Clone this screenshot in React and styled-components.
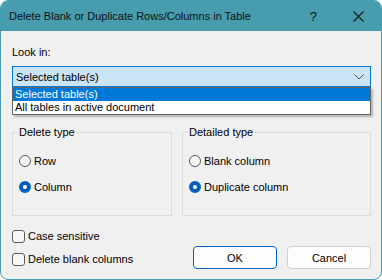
import React from 'react';
import styled, { createGlobalStyle } from 'styled-components';

const GlobalStyle = createGlobalStyle`
    html, body {
        margin: 0;
        padding: 0;
        background: #ffffff;
    }
    body {
        font-family: "Liberation Sans", Arial, sans-serif;
        font-size: 11px;
        color: #000;
    }
`;

const Chevron = () => (
    <svg width="10" height="6" viewBox="0 0 10 6">
        <path d="M0.5 0.5 L5 5 L9.5 0.5" fill="none" stroke="#555" strokeWidth="1" />
    </svg>
);

const CloseIcon = () => (
    <svg width="11" height="11" viewBox="0 0 11 11">
        <path d="M0.5 0.5 L10.5 10.5 M10.5 0.5 L0.5 10.5" fill="none" stroke="#1a1a1a" strokeWidth="1.1" />
    </svg>
);

const Radio = ({ checked, label }) => (
    <RadioRow>
        <RadioDot checked={checked} />
        <span>{label}</span>
    </RadioRow>
);

const Check = ({ label }) => (
    <CheckRow>
        <CheckBox />
        <span>{label}</span>
    </CheckRow>
);

const App = () => {
    return (
        <>
            <GlobalStyle />
            <Window>
                <TitleBar>
                    <Title>Delete Blank or Duplicate Rows/Columns in Table</Title>
                    <TitleButtons>
                        <span className="help">?</span>
                        <CloseIcon />
                    </TitleButtons>
                </TitleBar>
                <Body>
                    <Label>Look in:</Label>
                    <ComboWrap>
                        <Combo>
                            <span>Selected table(s)</span>
                            <Chevron />
                        </Combo>
                        <DropList>
                            <Option selected>Selected table(s)</Option>
                            <Option>All tables in active document</Option>
                        </DropList>
                    </ComboWrap>
                    <Groups>
                        <Group>
                            <Legend>Delete type</Legend>
                            <Radio label="Row" />
                            <Radio checked label="Column" />
                        </Group>
                        <Group>
                            <Legend>Detailed type</Legend>
                            <Radio label="Blank column" />
                            <Radio checked label="Duplicate column" />
                        </Group>
                    </Groups>
                    <Footer>
                        <Checks>
                            <Check label="Case sensitive" />
                            <Check label="Delete blank columns" />
                        </Checks>
                        <Buttons>
                            <Button primary>OK</Button>
                            <Button>Cancel</Button>
                        </Buttons>
                    </Footer>
                </Body>
            </Window>
        </>
    );
}

export default App;

const Window = styled.div`
    width: 382px;
    height: 280px;
    box-sizing: border-box;
    border: 1px solid #479cad;
    border-radius: 8px;
    overflow: hidden;
    background: #f0f0f0;
    display: flex;
    flex-direction: column;
`;

const TitleBar = styled.div`
    height: 30px;
    flex: none;
    background: #479cad;
    display: flex;
    align-items: center;
    justify-content: space-between;
    padding: 0 17px 0 8px;
`;

const Title = styled.div`
    color: #111;
    font-size: 11px;
`;

const TitleButtons = styled.div`
    display: flex;
    align-items: center;
    gap: 36px;

    .help {
        font-size: 13px;
        color: #111;
    }
`;

const Body = styled.div`
    flex: 1;
    padding: 13px 10px 0 11px;
    display: flex;
    flex-direction: column;
`;

const Label = styled.div`
    line-height: 16px;
    height: 16px;
`;

const ComboWrap = styled.div`
    position: relative;
    margin-top: 6px;
`;

const Combo = styled.div`
    height: 21px;
    box-sizing: border-box;
    border: 1px solid #0078d7;
    background: #cce4f7;
    display: flex;
    align-items: center;
    justify-content: space-between;
    padding: 0 6px 0 3px;
`;

const DropList = styled.div`
    position: absolute;
    top: 21px;
    left: 0;
    right: 0;
    background: #fff;
    border: 1px solid #646464;
    box-shadow: 2px 2px 2px rgba(0, 0, 0, 0.25);
    z-index: 2;
`;

const Option = styled.div`
    height: 13px;
    line-height: 13px;
    padding-left: 2px;
    background: ${p => p.selected ? '#0078d7' : '#fff'};
    color: ${p => p.selected ? '#fff' : '#000'};
`;

const Groups = styled.div`
    display: grid;
    grid-template-columns: 160px 189px;
    gap: 10px;
    margin-top: 45px;
`;

const Group = styled.div`
    position: relative;
    height: 84px;
    box-sizing: border-box;
    border: 1px solid #dcdcdc;
    padding: 20px 6px 0;
    display: flex;
    flex-direction: column;
    gap: 10px;
`;

const Legend = styled.span`
    position: absolute;
    top: -9px;
    left: 5px;
    padding: 0 1px;
    background: #f0f0f0;
    line-height: 16px;
`;

const RadioRow = styled.div`
    display: flex;
    align-items: center;
    gap: 3px;
    height: 16px;
`;

const RadioDot = styled.span`
    width: 12px;
    height: 12px;
    box-sizing: border-box;
    border-radius: 50%;
    border: ${p => p.checked ? '4px solid #005fb8' : '1px solid #5a5a5a'};
    background: ${p => p.checked ? '#fff' : '#f7f7f7'};
`;

const Footer = styled.div`
    display: flex;
    justify-content: space-between;
    margin-top: 12px;
`;

const Checks = styled.div`
    display: flex;
    flex-direction: column;
    gap: 7px;
`;

const CheckRow = styled.div`
    display: flex;
    align-items: center;
    gap: 3px;
    height: 16px;
`;

const CheckBox = styled.span`
    width: 13px;
    height: 13px;
    box-sizing: border-box;
    border: 1px solid #5a5a5a;
    border-radius: 3px;
    background: #f7f7f7;
`;

const Buttons = styled.div`
    display: flex;
    gap: 10px;
    margin-top: 18px;
`;

const Button = styled.div`
    width: 84px;
    height: 23px;
    box-sizing: border-box;
    display: flex;
    align-items: center;
    justify-content: center;
    border-radius: 4px;
    background: #fdfdfd;
    border: 1px solid ${p => p.primary ? '#0067c0' : '#d0d0d0'};
`;
